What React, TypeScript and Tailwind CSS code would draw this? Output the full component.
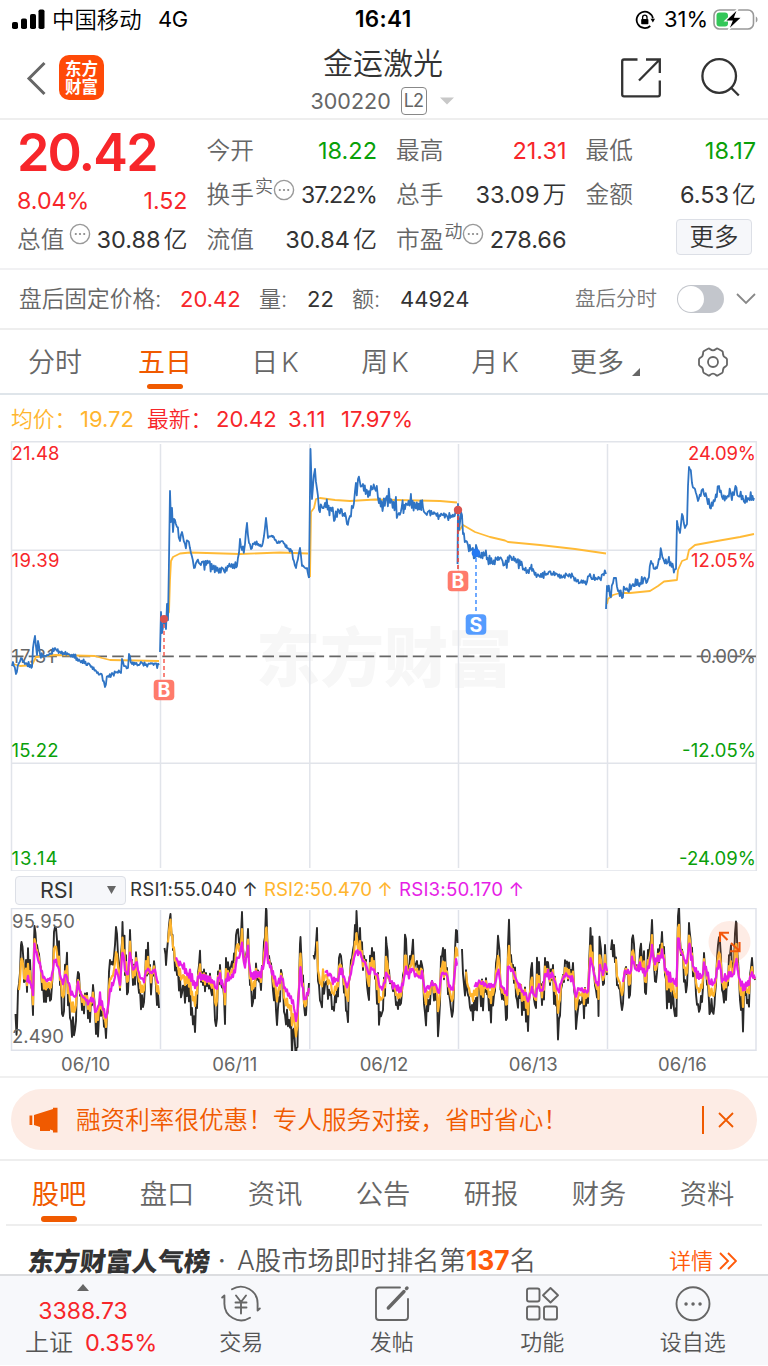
import type { ReactNode } from "react";

type PricePoint = [x: number, y: number];
type RsiPoint = [x: number, slow: number, fast: number];

// Repeatable jitter with a few larger spikes, so the lines keep a tick-by-tick texture
function jitter(i: number) {
  const v = Math.sin(i * 12.9898 + 4.7) * 43758.5453;
  const r = (v - Math.floor(v)) * 2 - 1;
  return r * r * r * 1.1 + (i % 2 ? 0.4 : -0.4);
}

function toPath(points: PricePoint[]) {
  return points.map(([x, y], i) => `${i ? "L" : "M"}${x.toFixed(1)} ${y.toFixed(1)}`).join("");
}

function tickPath(points: PricePoint[], amp: number) {
  const out: PricePoint[] = [];
  let n = 0;
  points.forEach(([x, y], i) => {
    out.push([x, y]);
    const next = points[i + 1];
    if (!next) return;
    const span = next[0] - x;
    for (let d = 0.9; d < span - 0.4; d += 0.9) {
      const t = d / span;
      n += 1;
      out.push([x + d, y + (next[1] - y) * t + jitter(n + Math.round(x) * 2) * amp]);
    }
  });
  return toPath(out);
}

function rsiPaths(points: RsiPoint[]) {
  const fast: PricePoint[] = [];
  const mid: PricePoint[] = [];
  const slow: PricePoint[] = [];
  const start = points[0][0];
  let n = 0;
  const add = (x: number, s: number, f: number) => {
    n += 1;
    fast.push([x, f]);
    if (x > start + 3) mid.push([x, s + (f - s) * 0.5]);
    if (x > start + 11) slow.push([x, s + (f - s) * 0.13 + jitter(n + 40) * 3.5]);
  };
  points.forEach(([x, s, f], i) => {
    add(x, s, f);
    const next = points[i + 1];
    if (!next) return;
    const span = next[0] - x;
    for (let d = 1; d < span - 0.4; d += 1) {
      const t = d / span;
      add(x + d, s + (next[1] - s) * t, f + (next[2] - f) * t + jitter(n + Math.round(start)) * 20);
    }
  });
  return { fast: toPath(fast), mid: toPath(mid), slow: toPath(slow) };
}

const priceDays: { amp: number; points: PricePoint[] }[] = [
  {
    amp: 2.6,
    points: [
      [12, 666], [13, 662], [16, 674], [19, 663], [21, 658], [25, 664], [32, 667], [33, 648], [35, 636], [37, 655], [38, 641], [40, 654],
      [47, 655], [51, 654], [55, 648], [60, 652], [70, 655], [80, 661], [90, 665], [97, 673], [102, 675], [105, 687], [108, 676],
      [112, 673], [117, 672], [121, 673], [122, 659], [124, 666], [128, 668], [129, 654], [132, 664], [140, 664], [150, 664], [159, 665],
    ],
  },
  {
    amp: 5,
    points: [
      [160, 652], [161, 612], [162, 633], [164, 619], [166, 629], [167, 604], [168, 620], [170, 491], [171, 522], [172, 508], [173, 532],
      [174, 519], [177, 527], [180, 541], [182, 532], [185, 544], [188, 541], [191, 553], [194, 568], [197, 561], [200, 564], [208, 563],
      [213, 567], [218, 570], [224, 571], [230, 566], [237, 566], [239, 553], [240, 539], [242, 550], [245, 544], [247, 523], [249, 543],
      [251, 549], [253, 543],
    ],
  },
  {
    amp: 2,
    points: [
      [253, 543], [262, 546], [264, 536], [266, 518], [268, 538], [273, 536], [277, 543], [282, 541], [287, 548], [292, 551], [293, 559],
      [296, 568], [300, 548], [302, 566], [307, 568], [309, 578],
    ],
  },
  {
    amp: 8,
    points: [
      [309, 578], [310.5, 449], [312, 499], [315, 469], [317, 489], [319, 510], [325, 503], [330, 508], [334, 521], [337, 517], [339, 511],
      [345, 513], [347, 524], [350, 516], [353, 508], [355, 491], [358, 479], [363, 484], [368, 497], [371, 486], [375, 489], [378, 498],
      [383, 508], [387, 496], [390, 503], [395, 506], [399, 513], [405, 509], [410, 504], [415, 506], [423, 508],
    ],
  },
  {
    amp: 3.5,
    points: [[423, 508], [425, 513], [433, 514], [443, 515], [452, 517], [457, 510]],
  },
  {
    amp: 5,
    points: [
      [457.5, 564], [458, 504], [459, 530], [461, 512], [462, 515], [463, 534], [466, 541], [468, 545], [472, 549], [475, 558], [476, 545],
      [478, 556], [485, 555], [492, 563], [498, 557], [505, 564], [510, 556], [517, 561], [522, 564], [527, 572], [532, 571], [537, 576],
      [540, 577], [545, 573], [552, 573],
    ],
  },
  {
    amp: 3,
    points: [[552, 573], [563, 577], [570, 575], [577, 581], [587, 582], [590, 574], [593, 579], [600, 579], [603, 574], [606, 574]],
  },
  {
    amp: 5,
    points: [
      [606, 609], [607, 586], [610, 596], [613, 583], [616, 578], [618, 591], [622, 598], [625, 589], [628, 591], [633, 584], [640, 583],
      [648, 579], [651, 561], [655, 569], [658, 564], [661.5, 552], [664, 561], [668, 562], [673, 566], [676, 569], [677, 521], [680, 533],
      [682, 514], [685, 528], [687, 524], [688, 486], [689, 467], [692, 483], [694, 488], [698, 501], [703, 489], [707, 499], [710, 508],
      [715, 500], [719, 486], [722, 497], [727, 497], [731, 494], [734, 495], [735.5, 486], [738, 496], [743, 498], [745, 503], [748, 498],
      [754, 498],
    ],
  },
];

const averageDays: PricePoint[][] = [
  [[13, 664], [20, 666], [32, 665], [36, 657], [55, 655], [95, 656], [102, 658], [110, 660], [159, 661]],
  [[164, 620], [169, 612], [170, 580], [171, 561], [173, 557], [180, 553.5], [190, 552.5], [240, 554], [280, 552.5], [308, 553.5]],
  [[310, 577], [311, 512], [314, 508], [316, 499], [320, 498], [335, 500], [350, 501], [375, 499.5], [440, 501], [457, 502.5]],
  [[459, 531], [463, 525], [475, 532], [490, 537], [505, 540.5], [508, 542], [540, 545], [575, 549], [606, 553.5]],
  [
    [607, 604], [608, 599], [613, 595], [620, 593], [630, 593], [650, 591], [658, 586], [664, 581.5], [677, 580], [678, 570], [682, 561],
    [687, 559], [689, 550], [695, 545], [717, 541], [740, 537], [754, 534],
  ],
];

const rsiDays: RsiPoint[][] = [
  [
    [15.5, 1010, 1014], [17, 1010, 1028], [18, 1005, 990], [21.5, 975, 942], [24, 975, 982], [30, 982, 960], [33, 994, 1015], [34.5, 952, 926],
    [37, 955, 945], [40, 966, 965], [42, 974, 990], [48, 978, 996], [52, 974, 985], [54, 966, 932], [57, 966, 940], [60, 975, 985],
    [63, 978, 1016], [66, 978, 970], [70, 984, 1018], [75, 990, 1030], [78, 988, 972], [82, 994, 1010], [86, 999, 1000], [90, 1000, 1022],
    [93, 1000, 985], [96, 1010, 1034], [100, 997, 1000], [103, 1008, 1010], [106, 1016, 1038], [110, 997, 960], [115, 980, 945],
    [117, 975, 934], [120, 985, 990], [122.5, 953, 922], [125, 968, 975], [128, 970, 992], [130, 953, 930], [133, 970, 985],
    [137, 962, 970], [140, 974, 990], [144, 978, 1002], [146, 972, 950], [150, 970, 965], [155, 972, 970], [157, 978, 1005], [159, 981, 1008],
  ],
  [
    [164.5, 950, 948], [166, 955, 965], [168, 945, 940], [170.5, 925, 914], [173, 945, 950], [177, 957, 975], [182, 963, 993],
    [187, 970, 996], [192, 975, 1008], [195, 980, 1032], [199, 978, 965], [203, 977, 985], [208, 978, 980], [213, 981, 985],
    [216, 985, 1026], [220, 976, 965], [223, 983, 985], [225, 985, 1024], [226, 980, 958], [230, 980, 968], [235, 973, 960],
    [237, 960, 930], [240, 958, 945], [242, 946, 912], [244, 965, 960], [246, 960, 955], [248, 950, 929], [250, 972, 985],
    [253, 974, 1002], [257, 974, 980], [261, 974, 990], [264, 965, 942], [266.5, 945, 910], [268, 962, 960], [272, 970, 975],
    [276, 975, 1010], [277, 978, 1025], [281, 977, 970], [285, 985, 1015], [289, 990, 1020], [293, 998, 1030], [295, 1010, 1045],
    [296.5, 1015, 1048], [298, 1000, 1010], [300.5, 970, 937], [302, 985, 980], [304, 1000, 1005], [306, 995, 1015], [309, 993, 983],
  ],
  [
    [313.5, 955, 955], [316, 950, 944], [319, 965, 985], [321, 965, 1003], [325, 967, 985], [330, 972, 995], [333, 979, 1007],
    [337, 977, 990], [340, 975, 954], [343, 975, 975], [347, 981, 1012], [350, 978, 975], [353, 965, 950], [355, 958, 925],
    [356.5, 955, 911], [358, 955, 945], [360, 954, 928], [363, 963, 970], [366, 965, 960], [369, 972, 1000], [372, 968, 948],
    [376, 972, 980], [380, 982, 1012], [383, 985, 1010], [386.5, 975, 944], [389, 980, 970], [392, 982, 985], [396, 985, 1005],
    [400, 990, 1005], [403, 985, 975], [406, 972, 939], [409, 978, 972], [412, 970, 952], [415, 975, 965], [420, 978, 975],
    [422, 975, 965], [425, 983, 1013], [429, 984, 1000], [433, 984, 985], [436, 984, 1000], [439, 987, 1022], [443, 975, 948],
    [447, 975, 968], [450, 985, 1000], [453, 985, 1011], [455, 975, 950], [456, 965, 930], [457.5, 970, 943],
  ],
  [
    [462, 960, 949], [464, 968, 985], [468, 978, 995], [472, 983, 1005], [475, 980, 1010], [480, 982, 990], [485, 984, 992],
    [490, 984, 1000], [494, 984, 995], [498.5, 975, 941], [501, 985, 990], [504, 988, 1000], [507, 990, 1018], [508, 972, 945],
    [511, 972, 955], [513, 973, 965], [517, 980, 1000], [521, 985, 985], [524, 990, 1010], [528, 998, 1031], [530, 995, 990],
    [532, 992, 963], [535, 993, 1005], [539, 990, 962], [542, 990, 1005], [545, 975, 958], [550, 978, 985], [553, 975, 965],
    [557, 985, 1005], [559, 987, 1019], [562, 978, 985], [566, 975, 963], [570, 978, 975], [573, 980, 963], [576, 990, 1029],
    [579, 985, 1000], [583, 990, 990], [588, 990, 1003], [590.5, 963, 928], [593, 970, 965], [596, 980, 990], [598.5, 982, 1016],
    [600, 970, 941], [603, 975, 985], [605, 965, 945], [607, 970, 975],
  ],
  [
    [611, 955, 950], [614, 952, 945], [618, 972, 985], [622, 980, 1010], [625, 970, 970], [630, 972, 995], [632, 965, 939],
    [636, 968, 965], [640, 970, 950], [643, 972, 965], [646, 970, 994], [648, 970, 950], [650, 965, 945], [652, 950, 920],
    [654, 960, 965], [656, 957, 982], [660, 960, 945], [662, 955, 932], [665, 968, 975], [669, 973, 1002], [673, 975, 990],
    [676.5, 980, 1016], [678, 940, 916], [681, 952, 955], [685, 955, 980], [687, 960, 985], [689.5, 945, 930], [691, 955, 955],
    [694, 968, 975], [698, 972, 1004], [702, 974, 1002], [704, 965, 953], [708, 975, 985], [709.5, 978, 1014], [715, 978, 995],
    [718, 968, 945], [720, 967, 942], [722, 975, 990], [726, 975, 1000], [730, 978, 955], [733, 977, 965], [736.5, 965, 923],
    [738, 975, 960], [741, 980, 1010], [745, 985, 995], [748, 980, 1000], [750, 980, 975], [752, 976, 958], [755, 978, 980],
  ],
];

const dayLines = [160.5, 309.8, 458.5, 607.5];
const dates = ["06/10", "06/11", "06/12", "06/13", "06/16"];
const periods = ["分时", "五日", "日K", "周K", "月K", "更多"];
const sections = ["股吧", "盘口", "资讯", "公告", "研报", "财务", "资料"];

function InfoDot() {
  return (
    <svg className="h-[22px] w-[22px] shrink-0" viewBox="0 0 22 22">
      <circle cx="11" cy="11" r="9.6" fill="none" stroke="#999" strokeWidth="1.4" />
      <circle cx="6.8" cy="11" r="1.1" fill="#888" />
      <circle cx="11" cy="11" r="1.1" fill="#888" />
      <circle cx="15.2" cy="11" r="1.1" fill="#888" />
    </svg>
  );
}

function Quote({
  label,
  sup,
  info,
  value,
  unit,
  color = "text-[#333]",
}: {
  label: string;
  sup?: string;
  info?: boolean;
  value: string;
  unit?: string;
  color?: string;
}) {
  return (
    <div className="flex h-[44.5px] items-center whitespace-nowrap">
      <span className="mt-px text-[23.7px] font-[350] text-[#666]">{label}</span>
      {sup && <span className="-mt-4 ml-px text-[18px] font-[350] text-[#666]">{sup}</span>}
      {info && <span className={sup ? "-mt-2.5" : "-mt-2.5 ml-[5px]"}><InfoDot /></span>}
      <span className={`ml-auto flex items-center ${value.endsWith("%") ? "text-[23px] tracking-[-0.04em]" : "text-[23.5px]"} ${color}`}>
        {value}
        {unit && <span className="mt-px ml-[3px] text-[24px] font-[350]">{unit}</span>}
      </span>
    </div>
  );
}

function Marker({ x, y, letter, color }: { x: number; y: number; letter: string; color: string }) {
  return (
    <g>
      <rect x={x - 10.3} y={y - 10.3} width="20.6" height="20.6" rx="4" fill={color} />
      <text x={x} y={y + 7} textAnchor="middle" fontSize="19.5" fontWeight="700" fill="#fff">
        {letter}
      </text>
    </g>
  );
}

function PriceChart() {
  return (
    <svg className="block h-[430px] w-full" viewBox="0 441 768 430" fontSize="18.5">
      <text x="384" y="681" textAnchor="middle" fontSize="64" fontWeight="900" fill="#f7f7f7">
        东方财富
      </text>
      <g stroke="#e1e4ea" strokeWidth="1.5" fill="none">
        <path d="M11.5 441.7H756.3V871H11.5Z" />
        <path d="M11.5 550.2H756.3M11.5 763.2H756.3" />
        {dayLines.map((x) => (
          <path key={x} d={`M${x} 444V868`} />
        ))}
      </g>
      <path d="M12 656.4H756" stroke="#666" strokeWidth="1.8" strokeDasharray="11.5 5.2" />
      <g fill="#f7262a">
        <text x="11.5" y="460" textLength="48">21.48</text>
        <text x="11.5" y="567" textLength="48">19.39</text>
        <text x="756" y="460" textAnchor="end" textLength="68">24.09%</text>
        <text x="756" y="567" textAnchor="end" textLength="65">12.05%</text>
      </g>
      <g fill="#666">
        <text x="11.5" y="662.5" textLength="43">17.31</text>
        <text x="756" y="662.5" textAnchor="end" textLength="56">0.00%</text>
      </g>
      <g fill="#09a009">
        <text x="11.5" y="757" textLength="47">15.22</text>
        <text x="11.5" y="864.5" textLength="46">13.14</text>
        <text x="756" y="757" textAnchor="end" textLength="74">-12.05%</text>
        <text x="756" y="864.5" textAnchor="end" textLength="77">-24.09%</text>
      </g>
      <g fill="none" strokeLinejoin="round">
        {averageDays.map((day, i) => (
          <path key={i} d={toPath(day)} stroke="#ffba36" strokeWidth="1.8" />
        ))}
        {priceDays.map((day, i) => (
          <path key={i} d={tickPath(day.points, day.amp)} stroke="#2f74c4" strokeWidth="1.8" />
        ))}
      </g>
      <g fill="none" strokeWidth="1.6" strokeDasharray="4 3">
        <path d="M164 624V680" stroke="#f7665c" />
        <path d="M458 516V571" stroke="#e8453c" />
        <path d="M476 558V614" stroke="#4b95ff" />
      </g>
      <circle cx="164" cy="619" r="4" fill="#d9534f" />
      <circle cx="458" cy="510" r="4.2" fill="#d9534f" />
      <circle cx="476" cy="553" r="4.4" fill="#2478f2" />
      <Marker x={164} y={690} letter="B" color="#ff7b6b" />
      <Marker x={458} y={581} letter="B" color="#ff7b6b" />
      <Marker x={476} y={624.5} letter="S" color="#559cff" />
    </svg>
  );
}

function RsiChart() {
  return (
    <svg className="block h-[143px] w-full" viewBox="0 908 768 143" fontSize="18.5">
      <g stroke="#dfe2ea" strokeWidth="1.5" fill="none">
        <path d="M11.5 908.5H756V1050.2H11.5Z" />
        {dayLines.map((x) => (
          <path key={x} d={`M${x} 910V1049`} />
        ))}
      </g>
      <g fill="none" strokeLinejoin="round">
        {rsiDays.map((day, i) => {
          const p = rsiPaths(day);
          return (
            <g key={i}>
              <path d={p.fast} stroke="#2a2a2a" strokeWidth="1.9" />
              <path d={p.mid} stroke="#ffb52e" strokeWidth="2.2" />
              <path d={p.slow} stroke="#e61ee6" strokeWidth="2.2" />
            </g>
          );
        })}
      </g>
      <g fill="#666">
        <text x="12" y="928" textLength="63">95.950</text>
        <text x="12" y="1043" textLength="52">2.490</text>
      </g>
      <circle cx="729.5" cy="942" r="21" fill="#fb7035" fillOpacity="0.13" />
      <path d="M727.5 940L720.5 933M720 942V932.7H729M731 943L739 950.5M739.5 942V951.3H730" fill="none" stroke="#f2570c" strokeWidth="2.1" />
    </svg>
  );
}

function NavItem({ label, children }: { label: string; children: ReactNode }) {
  return (
    <div className="flex flex-1 flex-col items-center pt-1.5">
      <svg className="h-11 w-11" viewBox="0 0 44 44" fill="none" stroke="#666" strokeWidth="1.9" strokeLinecap="round" strokeLinejoin="round">
        {children}
      </svg>
      <span className="mt-0.5 text-[22px] leading-7 font-[350] text-[#555]">{label}</span>
    </div>
  );
}

export default function App() {
  return (
    <div className="h-[1366px] w-[768px] overflow-hidden bg-white font-['Inter','Noto_Sans_CJK_SC',sans-serif] text-[#333]">
      {/* Status bar */}
      <div className="flex h-10 items-center pl-3 text-[22px] text-black">
        <svg className="h-5 w-8 overflow-visible" viewBox="0 0 32 20">
          <rect x="0" y="12" width="6" height="7" rx="1.8" />
          <rect x="9" y="8.5" width="6" height="10.5" rx="1.8" />
          <rect x="18" y="4" width="6" height="15" rx="1.8" />
          <rect x="26.5" y="-0.5" width="6" height="19.5" rx="1.8" />
        </svg>
        <span className="ml-2 w-[106px] text-[22.4px] font-[350] whitespace-nowrap">中国移动</span>
        <span className="-mt-0.5 w-[197px] tracking-tight">4G</span>
        <span className="-mt-0.5 w-[280px] text-[22.5px] font-semibold tracking-[0.015em]">16:41</span>
        <svg className="h-5 w-5" viewBox="0 0 20 20">
          <path d="M17.9 8.3A8.2 8.2 0 1 0 15.3 16" fill="none" stroke="#000" strokeWidth="1.8" />
          <path d="M15.5 8.8H20L17.9 12.4Z" />
          <rect x="6.2" y="9" width="7.2" height="5.2" rx="0.8" />
          <path d="M7.6 9.2V7.4a2.2 2.2 0 0 1 4.4 0V9.2" fill="none" stroke="#000" strokeWidth="1.3" />
        </svg>
        <span className="-mt-0.5 ml-[9px] w-[49px]">31%</span>
        <svg className="-mt-0.5 h-6 w-12" viewBox="0 0 48 24">
          <rect x="1" y="3" width="39.5" height="19" rx="5.5" fill="none" stroke="#999" strokeWidth="1.6" />
          <rect x="3.5" y="5.5" width="11.5" height="14" rx="3" fill="#34c759" />
          <path d="M42.8 9.5c2.3 1 2.3 5 0 6Z" fill="#999" />
          <path d="M25 1.5L12 14H19L15.2 23.2L29 10.2H21.7Z" stroke="#fff" strokeWidth="1.2" />
        </svg>
      </div>

      {/* Title bar */}
      <div className="flex h-20 border-b-2 border-[#eee]">
        <svg className="mt-[21px] ml-[26px] h-9 w-5" viewBox="0 0 20 36" fill="none" stroke="#666" strokeWidth="3">
          <path d="M18.5 2L3 17.5L18.5 33" />
        </svg>
        <div className="mt-[15px] ml-[13px] flex h-[45px] w-[45px] flex-col items-center justify-center rounded-[10px] bg-[#ff4a08] text-[16.5px] leading-[18px] font-bold text-white">
          <span>东方</span>
          <span>财富</span>
        </div>
        <div className="ml-[189px] flex w-[180px] flex-col items-center">
          <span className="mt-[5px] text-[30px] leading-9 font-[350]">金运激光</span>
          <div className="mt-1.5 ml-[-2px] flex items-center text-[21.5px] leading-7 text-[#666]">
            <span className="w-[90px]">300220</span>
            <span className="flex h-7 w-[26px] items-center justify-center rounded border border-[#888] text-[18px] tracking-tighter">L2</span>
            <svg className="ml-[13px] h-2 w-3.5" viewBox="0 0 14 8">
              <path d="M0 0.5H14L7 7.5Z" fill="#c8c8c8" />
            </svg>
          </div>
        </div>
        <svg className="mt-[17px] ml-[147px] h-[42px] w-[42px]" viewBox="0 0 42 42" fill="none" stroke="#333" strokeWidth="2.3">
          <path d="M17.5 2.5H4Q2.2 2.5 2.2 4.3V37.5Q2.2 39.3 4 39.3H38Q39.8 39.3 39.8 37.5V23.5M26 2.5H39.8V16M39 3.3L19 23.5" />
        </svg>
        <svg className="mt-[17px] ml-[38px] h-[42px] w-[42px]" viewBox="0 0 42 42" fill="none" stroke="#333" strokeWidth="2.3">
          <circle cx="19.2" cy="19" r="16.8" />
          <path d="M30.8 30.5L38.8 38.5" />
        </svg>
      </div>

      {/* Quote */}
      <div className="flex h-[150px] gap-[19px] border-b-2 border-[#f1f1f3] pt-2 pr-3 pl-[17px]">
        <div className="flex-1">
          <div className="mt-0.5 flex h-[46px] items-center text-[52px] font-semibold tracking-[-0.035em] text-[#f7262a]">20.42</div>
          <div className="mt-[6px] mb-px flex h-[34px] items-end justify-between text-[23.2px] leading-[30px] text-[#f7262a]">
            <span>8.04%</span>
            <span>1.52</span>
          </div>
          <Quote label="总值" info value="30.88" unit="亿" />
        </div>
        <div className="flex-1">
          <Quote label="今开" value="18.22" color="text-[#09a009]" />
          <Quote label="换手" sup="实" info value="37.22%" />
          <Quote label="流值" value="30.84" unit="亿" />
        </div>
        <div className="flex-1">
          <Quote label="最高" value="21.31" color="text-[#f7262a]" />
          <Quote label="总手" value="33.09" unit="万" />
          <Quote label="市盈" sup="动" info value="278.66" />
        </div>
        <div className="flex-1">
          <Quote label="最低" value="18.17" color="text-[#09a009]" />
          <Quote label="金额" value="6.53" unit="亿" />
          <div className="mt-[2px] mr-1 ml-auto flex h-9 w-[76px] items-center justify-center rounded border border-[#dcdfe6] bg-[#f6f7fa] text-[24.5px] font-[350]">
            更多
          </div>
        </div>
      </div>

      {/* After-hours */}
      <div className="flex h-[60px] items-center border-b-2 border-[#eee] pl-[19px] text-[22px]">
        <span className="mt-px w-[161px] text-[22.7px] font-[350] whitespace-nowrap text-[#666]">盘后固定价格:</span>
        <span className="w-[79px] text-[#f7262a]">20.42</span>
        <span className="mt-px w-12 font-[350] text-[#666]">量:</span>
        <span className="w-[45px]">22</span>
        <span className="mt-px w-12 font-[350] text-[#666]">额:</span>
        <span className="w-[175px]">44924</span>
        <span className="mt-px w-[102px] text-[20.5px] font-[350] text-[#777]">盘后分时</span>
        <div className="h-7 w-[47px] rounded-full bg-[#c3c6cc] p-px">
          <div className="h-[26px] w-[26px] rounded-full bg-white" />
        </div>
        <svg className="ml-3 h-3 w-5" viewBox="0 0 20 12" fill="none" stroke="#888" strokeWidth="1.8">
          <path d="M1 1L10 10L19 1" />
        </svg>
      </div>

      {/* Period tabs */}
      <div className="flex h-[65px] border-b-2 border-[#dfe5ea] text-[27px] text-[#666]">
        {periods.map((p) => (
          <div key={p} className={`relative flex w-[110px] justify-center pt-[13px] font-[350] ${p.endsWith("K") ? "pl-[3px] tracking-[3px]" : ""}`}>
            <span className={p === "五日" ? "leading-10 font-normal text-[#f05a00]" : "leading-10"}>{p}</span>
            {p === "五日" && <span className="absolute top-[54px] h-[5px] w-9 rounded-full bg-[#f05a00]" />}
            {p === "更多" && (
              <svg className="mt-[25px] ml-2 h-2 w-2" viewBox="0 0 8 8">
                <path d="M8 0V8H0Z" fill="#666" />
              </svg>
            )}
          </div>
        ))}
        <div className="flex flex-1 justify-center pt-[17px] pr-0.5">
          <svg className="h-[30px] w-8" viewBox="0 0 32 30" fill="none" stroke="#666" strokeWidth="1.8" strokeLinejoin="round">
            <path d="M11 1.8Q12 1 13 2Q16 4.7 19 2Q20 1 21 1.8L25 4Q26 4.8 25.9 6Q25.8 9.6 29 10.9Q30 11.6 30 12.6V17.4Q30 18.4 29 19.1Q25.8 20.4 25.9 24Q26 25.2 25 26L21 28.2Q20 29 19 28Q16 25.3 13 28Q12 29 11 28.2L7 26Q6 25.2 6.1 24Q6.2 20.4 3 19.1Q2 18.4 2 17.4V12.6Q2 11.6 3 10.9Q6.2 9.6 6.1 6Q6 4.8 7 4Z" />
            <circle cx="16" cy="15" r="5" />
          </svg>
        </div>
      </div>

      {/* Price chart */}
      <div className="flex h-[46px] items-center pt-0.5 pl-[11px] text-[22px] whitespace-nowrap text-[#f7262a]">
        <span className="w-[69px] text-[21.8px] font-[350] text-[#ffb52e]">均价：</span>
        <span className="w-[67px] text-[#ffb52e]">19.72</span>
        <span className="w-[69px] text-[21.8px] font-[350]">最新：</span>
        <span className="w-[72px]">20.42</span>
        <span className="w-[53px] tracking-[0.03em]">3.11</span>
        <span>17.97%</span>
      </div>
      <PriceChart />

      {/* RSI */}
      <div className="flex h-[37px] items-center pt-px pl-[15px] text-[18.7px] whitespace-nowrap">
        <div className="flex h-[29px] w-[111px] items-center justify-between rounded border border-[#dcdfe6] bg-[#f6f7fa] pr-[9px] pl-6 text-[21.5px]">
          RSI
          <svg className="h-2 w-[9px]" viewBox="0 0 9 8">
            <path d="M0 0H9L4.5 8Z" fill="#666" />
          </svg>
        </div>
        <span className="ml-1 w-[134px] tracking-[0.01em]">RSI1:55.040 ↑</span>
        <span className="w-[135px] text-[#ffb52e]">RSI2:50.470 ↑</span>
        <span className="tracking-[0.01em] text-[#e61ee6]">RSI3:50.170 ↑</span>
      </div>
      <RsiChart />
      <div className="grid h-[27px] grid-cols-5 border-b-2 border-[#f0f0f0] px-[11px] text-center text-[18.5px] leading-[27px] text-[#666]">
        {dates.map((d) => (
          <span key={d}>{d}</span>
        ))}
      </div>

      {/* Promotion */}
      <div className="h-[83px] border-b-2 border-[#eee] px-[11px] pt-[11px]">
        <div className="flex h-[61px] items-center rounded-full bg-[#fdece5] pl-[18px] text-[#f05a00]">
          <svg className="h-[26px] w-[30px]" viewBox="0 0 30 26" fill="#f05a00">
            <path d="M0.5 8.5H3.3V18H0.5ZM5 8L24 2V0.8H28.5V25.5H24V23.5L21 22.6V24H11V20L5 18Z" />
          </svg>
          <span className="mt-0.5 ml-[17px] w-[626px] text-[24.6px] font-[350]">融资利率很优惠！专人服务对接，省时省心！</span>
          <span className="h-7 w-[1.5px] bg-[#f05a00]" />
          <svg className="ml-3.5 h-4 w-4" viewBox="0 0 16 16" fill="none" stroke="#f05a00" strokeWidth="1.8">
            <path d="M1 1L15 15M15 1L1 15" />
          </svg>
        </div>
      </div>

      {/* Section tabs */}
      <div className="mx-[6px] flex h-[65px] border-b-2 border-[#eee] text-[27.3px] text-[#666]">
        {sections.map((s) => (
          <div key={s} className="relative flex flex-1 justify-center pt-[14px] pr-[2px] font-[350]">
            <span className={s === "股吧" ? "leading-10 font-normal text-[#f05a00]" : "leading-10"}>{s}</span>
            {s === "股吧" && <span className="absolute top-[55px] h-[6px] w-9 rounded-full bg-[#f05a00]" />}
          </div>
        ))}
      </div>
      <div className="flex h-12 items-center pt-[22px] pl-7 text-[26.4px] whitespace-nowrap text-[#555]">
        <span className="w-[190px] -skew-x-6 text-[26px] font-black text-[#333]">东方财富人气榜</span>
        <span className="w-[19px]">·</span>
        <span className="w-[432px] font-[350]">
          A股市场即时排名第<span className="font-bold text-[#ff5a0a]">137</span>名
        </span>
        <span className="w-[50px] text-[22px] font-[350] text-[#ff5a0a]">详情</span>
        <svg className="h-[18px] w-[18px]" viewBox="0 0 18 18" fill="none" stroke="#ff5a0a" strokeWidth="1.9">
          <path d="M1 1L9 9L1 17M9 1L17 9L9 17" />
        </svg>
      </div>

      {/* Bottom navigation */}
      <div className="flex h-[91px] border-t-2 border-[#dcdde0] bg-[#f7f8fb]">
        <div className="flex w-[166px] flex-col items-center pt-2 text-[23px]">
          <svg className="h-[7px] w-3" viewBox="0 0 12 7">
            <path d="M0 7L6 0L12 7Z" fill="#666" />
          </svg>
          <span className="mt-1 leading-8 text-[#f7262a]">3388.73</span>
          <div className="ml-6 flex w-[140px] leading-8 whitespace-nowrap">
            <span className="w-[60px] text-[24px] font-[350] text-[#555]">上证</span>
            <span className="text-[23.5px] text-[#f7262a]">0.35%</span>
          </div>
        </div>
        <NavItem label="交易">
          <path d="M13 7.3A16.8 16.8 0 0 1 38.6 22V28.5L40.8 26.5M31 35.8A16.8 16.8 0 0 1 5.4 21V13.5L3.2 15.5" />
          <path d="M17 13.5L22 20L27 13.5M16.5 20.5H27.5M16.5 25.5H27.5M22 20V31.5" />
        </NavItem>
        <NavItem label="发帖">
          <path d="M30 5.5H9Q6 5.5 6 8.5V35Q6 38 9 38H35Q38 38 38 35V17" />
          <path d="M18.3 26L34 9.5" strokeWidth="3.4" />
          <path d="M36.5 6.5L37 6" strokeWidth="3.4" />
        </NavItem>
        <NavItem label="功能">
          <rect x="7" y="6.5" width="12.5" height="13" rx="2" />
          <rect x="7" y="24.5" width="12.5" height="13" rx="2" />
          <rect x="24" y="24.5" width="13" height="13" rx="2" />
          <path d="M30.5 6L38 13.3L30.5 20.5L23 13.3Z" />
        </NavItem>
        <NavItem label="设自选">
          <circle cx="22" cy="21.8" r="16.5" />
          <path d="M15 22H15.1M22 22H22.1M29 22H29.1" strokeWidth="3.4" />
        </NavItem>
      </div>
    </div>
  );
}
